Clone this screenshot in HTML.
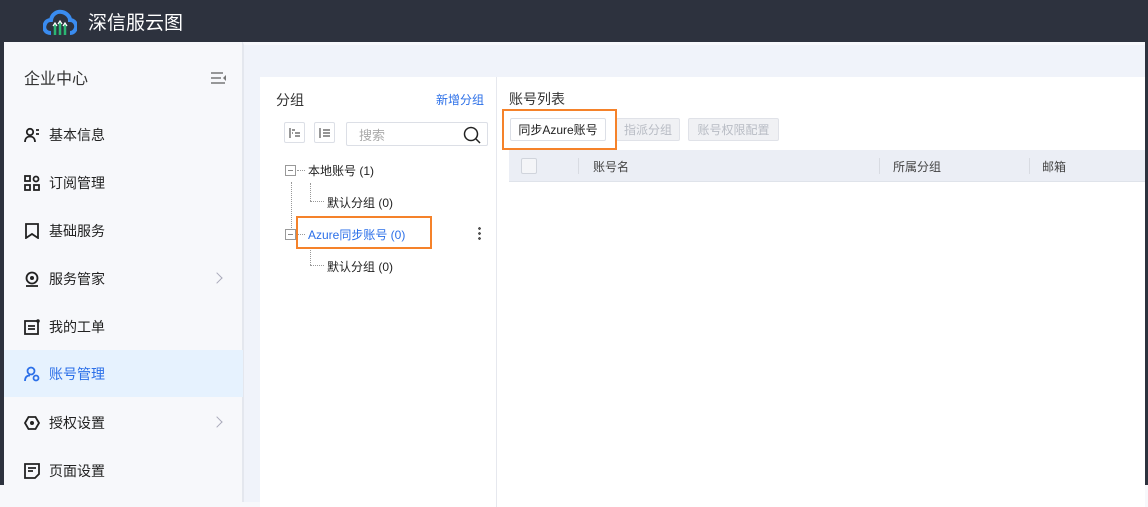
<!DOCTYPE html>
<html style="background:#f7f8fb"><head><meta charset="utf-8"><style>
*{margin:0;padding:0;box-sizing:border-box}
body{width:1148px;height:485px;overflow:hidden;background:#2d323e;font-family:"Liberation Sans","Noto Sans CJK SC",sans-serif;font-size:13px;color:#222;position:relative}
.top{position:absolute;left:0;top:0;width:1148px;height:42px;background:#2d323e}
.logo{position:absolute;left:43px;top:9px}
.title{position:absolute;left:88px;top:8px;color:#fff;font-size:19px}
.side{position:absolute;left:4px;top:42px;width:239px;height:460px;background:#f7f8fb;border-right:1px solid #e4e7ee}
.main{position:absolute;left:243px;top:42px;width:902px;height:460px;background:#f0f3fa;border-top:3px solid #f7f8fc;border-left:1px solid #e4e7ee}
.panel{position:absolute;left:260px;top:77px;width:885px;height:430px;background:#fff}
.it{position:absolute;left:0;width:239px;height:47px;display:flex;align-items:center;padding-left:20px;font-size:14px;color:#222}
.it svg{margin-right:9px}
.it.act{background:#e6f2fe;color:#2b6fe8}
.chev{position:absolute;right:22px;top:19px;width:8px;height:8px;border-right:1.3px solid #aab;border-top:1.3px solid #aab;transform:rotate(45deg)}
.abs{position:absolute}
.btn{position:absolute;height:23px;border:1px solid #dcdfe6;border-radius:2px;font-size:12px;display:flex;align-items:center;justify-content:center}
.dis{background:#f0f1f4;color:#b8bcc4;border-color:#e0e2e8}
.org{position:absolute;border:2px solid #f5822a}
.dot{position:absolute;border-left:1px dotted #999}
.doth{position:absolute;border-top:1px dotted #999}
.box{position:absolute;width:11px;height:11px;border:1px solid #999;background:#fff}
.box:after{content:"";position:absolute;left:2px;top:4px;width:5px;border-top:1px solid #888}
</style></head><body>
<div class="top">
<svg class="logo" width="34" height="28" viewBox="0 0 34 28"><path d="M8 24 C2 24 0 19 2 15 C3 12 6 11 8 11 C9 5 14 2 19 3 C24 4 27 8 27 11 C31 11 34 15 33 19 C32 22 30 24 27 24" fill="none" stroke="#3a8cf0" stroke-width="4"/><path d="M12 26V15M17 26V13M22 26V15" stroke="#2bb673" stroke-width="2.5"/><path d="M10 17l2-3 2 3M15 15l2-3 2 3M20 17l2-3 2 3" stroke="#fff" stroke-width="1.2" fill="none"/></svg>
<div class="title">深信服云图</div>
</div>
<div class="side">
<div class="abs" style="left:20px;top:23px;font-size:16px;color:#333">企业中心</div>
<svg class="abs" style="left:207px;top:30px" width="16" height="12"><path d="M0 1h12M0 6h10M0 11h14" stroke="#777" stroke-width="1.5"/><path d="M15 3l-3 3 3 3z" fill="#777"/></svg>
<div class="it" style="top:69px"><svg width="16" height="16"><circle cx="6" cy="5" r="3.2" fill="none" stroke="#222" stroke-width="1.8"/><path d="M1 15c0-4 2.5-5.5 5-5.5s5 1.5 5 5.5" fill="none" stroke="#222" stroke-width="1.8"/><path d="M12 3h3M12 7h3" stroke="#222" stroke-width="1.8"/></svg>基本信息</div>
<div class="it" style="top:117px"><svg width="16" height="16"><rect x="1" y="1" width="5" height="5" fill="none" stroke="#222" stroke-width="1.8"/><circle cx="12" cy="4" r="2.5" fill="none" stroke="#222" stroke-width="1.8"/><rect x="1" y="10" width="5" height="5" fill="none" stroke="#222" stroke-width="1.8"/><rect x="10" y="10" width="5" height="5" fill="none" stroke="#222" stroke-width="1.8"/></svg>订阅管理</div>
<div class="it" style="top:165px"><svg width="16" height="16"><path d="M2 15V1h12v14l-6-4z" fill="none" stroke="#222" stroke-width="1.8"/></svg>基础服务</div>
<div class="it" style="top:213px"><svg width="16" height="16"><circle cx="8" cy="7" r="5.5" fill="none" stroke="#222" stroke-width="1.8"/><circle cx="8" cy="7" r="2" fill="#222"/><path d="M2 15h12" stroke="#222" stroke-width="1.8"/></svg>服务管家<span class="chev"></span></div>
<div class="it" style="top:261px"><svg width="16" height="16"><rect x="1" y="2" width="13" height="13" fill="none" stroke="#222" stroke-width="1.8"/><path d="M4 7h7M4 10h7" stroke="#222" stroke-width="1.8"/><circle cx="14" cy="2" r="1.8" fill="#222"/></svg>我的工单</div>
<div class="it act" style="top:308px"><svg width="16" height="16"><circle cx="7" cy="5" r="3.5" fill="none" stroke="#2b6fe8" stroke-width="1.8"/><path d="M1 15c0-4 2-5.5 5-5.5" fill="none" stroke="#2b6fe8" stroke-width="1.8"/><circle cx="12" cy="12" r="2.5" fill="none" stroke="#2b6fe8" stroke-width="1.8"/></svg>账号管理</div>
<div class="it" style="top:357px"><svg width="16" height="16"><path d="M4.5 2h7l3.5 6-3.5 6h-7L1 8z" fill="none" stroke="#222" stroke-width="1.8"/><circle cx="8" cy="8" r="2" fill="#222"/></svg>授权设置<span class="chev"></span></div>
<div class="it" style="top:405px"><svg width="16" height="16"><path d="M1 1h14v10l-4 4H1z" fill="none" stroke="#222" stroke-width="1.8"/><path d="M4 5h8M4 8h5" stroke="#222" stroke-width="1.8"/></svg>页面设置</div>
</div>
<div class="main"></div>
<div class="panel">
<div class="abs" style="left:236px;top:0;width:1px;height:430px;background:#e6e8ee"></div>
<div class="abs" style="left:16px;top:13px;font-size:14px;color:#333">分组</div>
<div class="abs" style="left:176px;top:14px;font-size:12px;color:#2b6fe8">新增分组</div>
<div class="btn" style="left:24px;top:45px;width:21px;height:21px"><svg width="12" height="10"><path d="M1 0v10M3 2h3M6 5h5M6 8h5M3 5h1" stroke="#555" stroke-width="1.2"/></svg></div>
<div class="btn" style="left:54px;top:45px;width:21px;height:21px"><svg width="12" height="10"><path d="M1 0v10M4 2h7M4 5h7M4 8h7" stroke="#555" stroke-width="1.2"/></svg></div>
<div class="btn" style="left:86px;top:45px;width:142px;height:24px;justify-content:flex-start;padding-left:12px;color:#aaa;font-size:13px">搜索
<svg class="abs" style="right:6px;top:3px" width="18" height="18"><circle cx="8" cy="8" r="6.5" fill="none" stroke="#222" stroke-width="1.5"/><path d="M13 13l4 4" stroke="#222" stroke-width="1.5"/></svg></div>
<div class="dot" style="left:31px;top:105px;height:48px"></div>
<div class="dot" style="left:50px;top:106px;height:18px"></div>
<div class="dot" style="left:50px;top:170px;height:18px"></div>
<div class="box" style="left:25px;top:88px"></div><div class="doth" style="left:37px;top:93px;width:8px"></div>
<div class="abs" style="left:48px;top:85px;font-size:12px">本地账号 (1)</div>
<div class="doth" style="left:50px;top:124px;width:14px"></div>
<div class="abs" style="left:67px;top:117px;font-size:12px">默认分组 (0)</div>
<div class="box" style="left:25px;top:152px"></div><div class="doth" style="left:37px;top:157px;width:8px"></div>
<div class="abs" style="left:48px;top:149px;font-size:12px;color:#2b6fe8">Azure同步账号 (0)</div>
<div class="abs" style="left:218px;top:149px;width:3px;height:14px;background:radial-gradient(circle,#555 1.3px,transparent 1.5px) 0 0/3px 5px"></div>
<div class="doth" style="left:50px;top:188px;width:14px"></div>
<div class="abs" style="left:67px;top:181px;font-size:12px">默认分组 (0)</div>
<div class="org" style="left:36px;top:139px;width:136px;height:33px"></div>
<div class="abs" style="left:249px;top:12px;font-size:14px;color:#333">账号列表</div>
<div class="btn" style="left:250px;top:41px;width:96px;color:#222">同步Azure账号</div>
<div class="btn dis" style="left:356px;top:41px;width:64px">指派分组</div>
<div class="btn dis" style="left:428px;top:41px;width:91px">账号权限配置</div>
<div class="org" style="left:242px;top:32px;width:115px;height:41px"></div>
<div class="abs" style="left:249px;top:73px;width:636px;height:32px;background:#ebeef5;border-bottom:1px solid #dfe3ea">
<div class="abs" style="left:12px;top:8px;width:16px;height:16px;border:1px solid #d0d4dc;border-radius:2px;background:#f4f5f8"></div>
<div class="abs" style="left:69px;top:8px;width:1px;height:16px;background:#d8dbe2"></div>
<div class="abs" style="left:84px;top:8px;font-size:12px;color:#444">账号名</div>
<div class="abs" style="left:370px;top:8px;width:1px;height:16px;background:#d8dbe2"></div>
<div class="abs" style="left:384px;top:8px;font-size:12px;color:#444">所属分组</div>
<div class="abs" style="left:520px;top:8px;width:1px;height:16px;background:#d8dbe2"></div>
<div class="abs" style="left:533px;top:8px;font-size:12px;color:#444">邮箱</div>
</div>
</div>
</body></html>
